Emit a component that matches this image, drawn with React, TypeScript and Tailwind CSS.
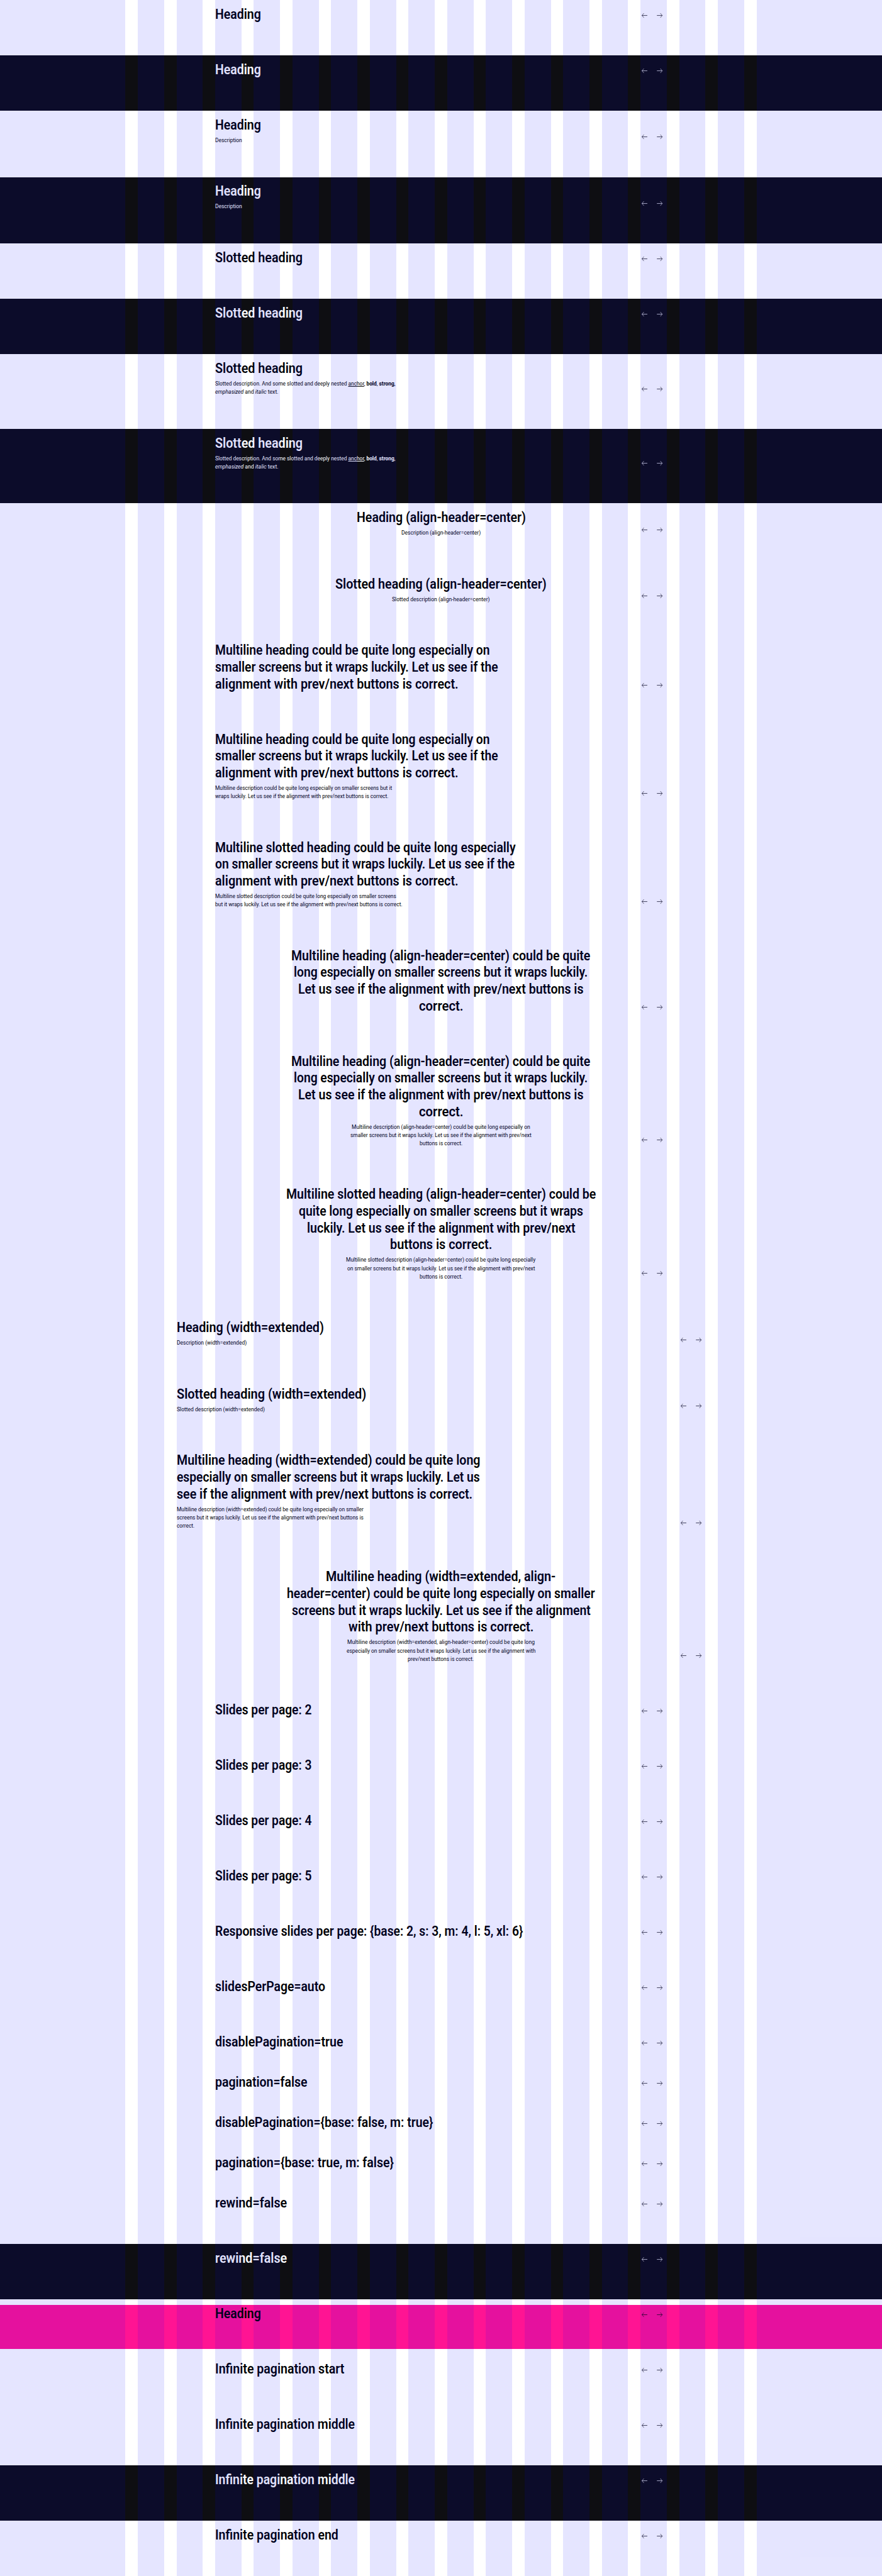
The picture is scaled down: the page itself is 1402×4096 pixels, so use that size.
import { useLayoutEffect, useRef, useState, type ReactNode } from "react";

type Line = [content: ReactNode, width: number];

type Item = {
  heading: Line[];
  description?: Line[];
  theme?: "light" | "dark" | "pink";
  center?: boolean;
  extended?: boolean;
  noPagination?: boolean;
};

const SCALE = 1402 / 2560;

/* One line of text, condensed horizontally to its design width. */
function FitLine({ width, children }: { width: number; children: ReactNode }) {
  const ref = useRef<HTMLSpanElement>(null);
  const [factor, setFactor] = useState(1);
  const target = width * SCALE;
  useLayoutEffect(() => {
    const el = ref.current;
    if (!el) return;
    el.style.transform = "none";
    const natural = el.getBoundingClientRect().width;
    el.style.transform = `translateY(0.9px) scaleX(${target / natural})`;
    setFactor(target / natural);
  }, [target]);
  return (
    <span className="block whitespace-nowrap" style={{ width: target }}>
      <span
        ref={ref}
        className="inline-block origin-left align-top"
        style={{ transform: `translateY(0.9px) scaleX(${factor})` }}
      >
        {children}
      </span>
    </span>
  );
}

function Arrow({ flip }: { flip?: boolean }) {
  return (
    <button
      aria-label={flip ? "next" : "prev"}
      className="flex size-[21.907px] items-center justify-center"
    >
      <svg
        viewBox="0 0 24 24"
        className={flip ? "size-[13.144px] -scale-x-100" : "size-[13.144px]"}
        fill="none"
        stroke="currentColor"
      >
        <path d="M20 12H4.4" strokeWidth="1.3" />
        <path d="M10 5.6 4.5 12l5.500 6.400" strokeWidth="1.1" />
      </svg>
    </button>
  );
}

const themes = {
  light: "text-[#010205]",
  dark: "bg-[#0e0e12] text-[#fbfcff]",
  pink: "bg-[#ff1493] text-[#010205]",
};

function Carousel({ heading, description, theme = "light", center, extended, noPagination }: Item) {
  const pink = theme === "pink";
  const pad = pink
    ? "my-[8.765625px] pt-0 pb-[43.8125px]"
    : noPagination
      ? "pt-[8.765625px] pb-[28.46875px]"
      : "pt-[8.765625px] pb-[52.578125px]";
  return (
    <section className={`${themes[theme]} ${pad}`}>
      <header
        className={`grid items-end ${extended ? "mx-[280.54px]" : "mx-[342.02px]"} ${
          center ? "grid-cols-[1fr_auto_1fr]" : "grid-cols-[auto_1fr]"
        }`}
      >
        {center && <span />}
        <div className={center ? "flex flex-col items-center" : ""}>
          <h2
            className={`text-[21.5px] leading-[26.65625px] font-semibold ${center ? "flex flex-col items-center" : ""}`}
          >
            {heading.map(([text, width], i) => (
              <FitLine key={i} width={width}>
                {text}
              </FitLine>
            ))}
          </h2>
          {description && (
            <p
              className={`mt-[4.375px] text-[8.763px] leading-[13.15625px] ${center ? "flex flex-col items-center" : ""}`}
            >
              {description.map(([text, width], i) => (
                <FitLine key={i} width={width}>
                  {text}
                </FitLine>
              ))}
            </p>
          )}
        </div>
        <nav className="flex gap-[2.191px] justify-self-end">
          <Arrow />
          <Arrow flip />
        </nav>
      </header>
    </section>
  );
}

const richDescription: Line[] = [
  [
    <>
      Slotted description. And some slotted and deeply nested <a className="underline">anchor</a>, <b>bold</b>,{" "}
      <strong>strong</strong>,
    </>,
    523,
  ],
  [
    <>
      <em>emphasized</em> and <i>italic</i> text.
    </>,
    183.5,
  ],
];

const multiline: Line[] = [
  ["Multiline heading could be quite long especially on", 797],
  ["smaller screens but it wraps luckily. Let us see if the", 821],
  ["alignment with prev/next buttons is correct.", 706],
];

const multilineCenter: Line[] = [
  ["Multiline heading (align-header=center) could be quite", 868],
  ["long especially on smaller screens but it wraps luckily.", 853],
  ["Let us see if the alignment with prev/next buttons is", 828],
  ["correct.", 129],
];

const items: Item[] = [
  { heading: [["Heading", 133]] },
  { heading: [["Heading", 133]], theme: "dark" },
  { heading: [["Heading", 133]], description: [["Description", 78]] },
  { heading: [["Heading", 133]], description: [["Description", 78]], theme: "dark" },
  { heading: [["Slotted heading", 254]] },
  { heading: [["Slotted heading", 254]], theme: "dark" },
  { heading: [["Slotted heading", 254]], description: richDescription },
  { heading: [["Slotted heading", 254]], description: richDescription, theme: "dark" },
  {
    heading: [["Heading (align-header=center)", 491]],
    description: [["Description (align-header=center)", 230.5]],
    center: true,
  },
  {
    heading: [["Slotted heading (align-header=center)", 613]],
    description: [["Slotted description (align-header=center)", 284]],
    center: true,
  },
  { heading: multiline },
  {
    heading: multiline,
    description: [
      ["Multiline description could be quite long especially on smaller screens but it", 513.5],
      ["wraps luckily. Let us see if the alignment with prev/next buttons is correct.", 503],
    ],
  },
  {
    heading: [
      ["Multiline slotted heading could be quite long especially", 872],
      ["on smaller screens but it wraps luckily. Let us see if the", 869.5],
      ["alignment with prev/next buttons is correct.", 706],
    ],
    description: [
      ["Multiline slotted description could be quite long especially on smaller screens", 525.5],
      ["but it wraps luckily. Let us see if the alignment with prev/next buttons is correct.", 543.5],
    ],
  },
  { heading: multilineCenter, center: true },
  {
    heading: multilineCenter,
    description: [
      ["Multiline description (align-header=center) could be quite long especially on", 518],
      ["smaller screens but it wraps luckily. Let us see if the alignment with prev/next", 525.5],
      ["buttons is correct.", 124.5],
    ],
    center: true,
  },
  {
    heading: [
      ["Multiline slotted heading (align-header=center) could be", 899],
      ["quite long especially on smaller screens but it wraps", 825],
      ["luckily. Let us see if the alignment with prev/next", 779],
      ["buttons is correct.", 296.5],
    ],
    description: [
      ["Multiline slotted description (align-header=center) could be quite long especially", 550],
      ["on smaller screens but it wraps luckily. Let us see if the alignment with prev/next", 545],
      ["buttons is correct.", 124.5],
    ],
    center: true,
  },
  {
    heading: [["Heading (width=extended)", 427]],
    description: [["Description (width=extended)", 203]],
    extended: true,
  },
  {
    heading: [["Slotted heading (width=extended)", 550]],
    description: [["Slotted description (width=extended)", 255.5]],
    extended: true,
  },
  {
    heading: [
      ["Multiline heading (width=extended) could be quite long", 881],
      ["especially on smaller screens but it wraps luckily. Let us", 879.5],
      ["see if the alignment with prev/next buttons is correct.", 858.5],
    ],
    description: [
      ["Multiline description (width=extended) could be quite long especially on smaller", 542],
      ["screens but it wraps luckily. Let us see if the alignment with prev/next buttons is", 542],
      ["correct.", 51.5],
    ],
    extended: true,
  },
  {
    heading: [
      ["Multiline heading (width=extended, align-", 667],
      ["header=center) could be quite long especially on smaller", 894],
      ["screens but it wraps luckily. Let us see if the alignment", 867],
      ["with prev/next buttons is correct.", 537.5],
    ],
    description: [
      ["Multiline description (width=extended, align-header=center) could be quite long", 544],
      ["especially on smaller screens but it wraps luckily. Let us see if the alignment with", 548.5],
      ["prev/next buttons is correct.", 192],
    ],
    center: true,
    extended: true,
  },
  { heading: [["Slides per page: 2", 280]] },
  { heading: [["Slides per page: 3", 280]] },
  { heading: [["Slides per page: 4", 280]] },
  { heading: [["Slides per page: 5", 280]] },
  { heading: [["Responsive slides per page: {base: 2, s: 3, m: 4, l: 5, xl: 6}", 893.5]] },
  { heading: [["slidesPerPage=auto", 319.5]] },
  { heading: [["disablePagination=true", 371.5]], noPagination: true },
  { heading: [["pagination=false", 267.5]], noPagination: true },
  { heading: [["disablePagination={base: false, m: true}", 632.5]], noPagination: true },
  { heading: [["pagination={base: true, m: false}", 518.5]], noPagination: true },
  { heading: [["rewind=false", 208.5]] },
  { heading: [["rewind=false", 208.5]], theme: "dark" },
  { heading: [["Heading", 133]], theme: "pink" },
  { heading: [["Infinite pagination start", 375]] },
  { heading: [["Infinite pagination middle", 405.5]] },
  { heading: [["Infinite pagination middle", 405.5]], theme: "dark" },
  { heading: [["Infinite pagination end", 357.5]] },
];

/* Translucent column guides drawn over the whole page. */
function GridOverlay() {
  return (
    <div className="pointer-events-none absolute inset-0 flex gap-[19.716px]">
      <div className="w-[199.347px] shrink-0 bg-[#0000ff]/10" />
      {Array.from({ length: 16 }, (_, i) => (
        <div key={i} className="flex-1 bg-[#0000ff]/10" />
      ))}
      <div className="w-[199.347px] shrink-0 bg-[#0000ff]/10" />
    </div>
  );
}

export default function App() {
  return (
    <main className="relative flex h-[4096px] w-[1402px] flex-col overflow-hidden bg-white font-['Roboto',sans-serif]">
      {items.map((item, i) => (
        <Carousel key={i} {...item} />
      ))}
      <GridOverlay />
    </main>
  );
}
